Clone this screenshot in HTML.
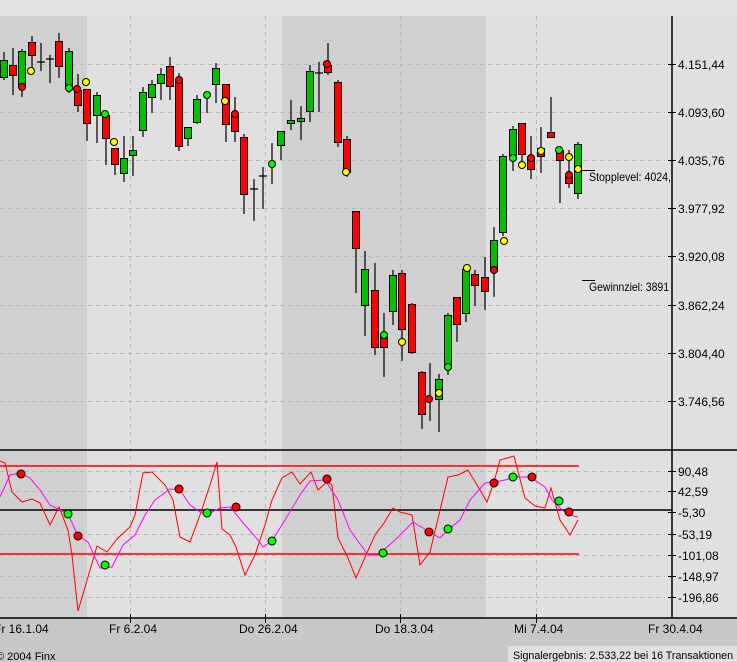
<!DOCTYPE html>
<html><head><meta charset="utf-8"><style>
html,body{margin:0;padding:0;background:#c8c8c8;}
svg{display:block;font-family:"Liberation Sans",sans-serif;}
</style></head><body>
<svg width="737" height="662" viewBox="0 0 737 662" xmlns="http://www.w3.org/2000/svg">
<rect x="0" y="0" width="737" height="662" fill="#c8c8c8"/>
<rect x="0" y="0" width="737" height="618" fill="#e0e0e0"/>
<rect x="0" y="0" width="737" height="16" fill="#e4e4e4"/>
<rect x="0" y="16" width="87" height="602" fill="#d0d0d0"/>
<rect x="282" y="16" width="204" height="602" fill="#d0d0d0"/>
<g stroke="#b8b8b8" stroke-dasharray="4,4" stroke-width="1">
<line x1="0" y1="64.5" x2="665" y2="64.5"/><line x1="0" y1="112.5" x2="665" y2="112.5"/><line x1="0" y1="160.5" x2="665" y2="160.5"/><line x1="0" y1="208.5" x2="665" y2="208.5"/><line x1="0" y1="256.5" x2="665" y2="256.5"/><line x1="0" y1="305.5" x2="665" y2="305.5"/><line x1="0" y1="353.5" x2="665" y2="353.5"/><line x1="0" y1="401.5" x2="665" y2="401.5"/>
<line x1="0" y1="471.5" x2="665" y2="471.5"/><line x1="0" y1="491.5" x2="665" y2="491.5"/><line x1="0" y1="534.5" x2="665" y2="534.5"/><line x1="0" y1="555.5" x2="665" y2="555.5"/><line x1="0" y1="576.5" x2="665" y2="576.5"/><line x1="0" y1="597.5" x2="665" y2="597.5"/>
<line x1="130.5" y1="16" x2="130.5" y2="618"/><line x1="265.5" y1="16" x2="265.5" y2="618"/><line x1="400.5" y1="16" x2="400.5" y2="618"/><line x1="536.5" y1="16" x2="536.5" y2="618"/>
</g>
<g stroke="#000" stroke-width="1.5">
<line x1="672" y1="16" x2="672" y2="618"/>
<line x1="0" y1="450" x2="737" y2="450"/>
<line x1="0" y1="618" x2="737" y2="618"/>
<line x1="0" y1="510" x2="672" y2="510"/>
</g>
<g stroke="#000" stroke-width="1">
<line x1="668" y1="64.5" x2="676" y2="64.5"/><line x1="668" y1="112.5" x2="676" y2="112.5"/><line x1="668" y1="160.5" x2="676" y2="160.5"/><line x1="668" y1="208.5" x2="676" y2="208.5"/><line x1="668" y1="256.5" x2="676" y2="256.5"/><line x1="668" y1="305.5" x2="676" y2="305.5"/><line x1="668" y1="353.5" x2="676" y2="353.5"/><line x1="668" y1="401.5" x2="676" y2="401.5"/>
<line x1="668" y1="471.5" x2="676" y2="471.5"/><line x1="668" y1="491.5" x2="676" y2="491.5"/><line x1="668" y1="512.5" x2="676" y2="512.5"/><line x1="668" y1="534.5" x2="676" y2="534.5"/><line x1="668" y1="555.5" x2="676" y2="555.5"/><line x1="668" y1="576.5" x2="676" y2="576.5"/><line x1="668" y1="597.5" x2="676" y2="597.5"/>
<line x1="130.5" y1="614" x2="130.5" y2="623"/><line x1="265.5" y1="614" x2="265.5" y2="623"/><line x1="400.5" y1="614" x2="400.5" y2="623"/><line x1="536.5" y1="614" x2="536.5" y2="623"/>
</g>
<g font-size="12" fill="#000">
<text x="678" y="69">4.151,44</text><text x="678" y="117">4.093,60</text><text x="678" y="165">4.035,76</text><text x="678" y="213">3.977,92</text><text x="678" y="261">3.920,08</text><text x="678" y="310">3.862,24</text><text x="678" y="358">3.804,40</text><text x="678" y="406">3.746,56</text>
<text x="678" y="476">90,48</text><text x="678" y="496">42,59</text><text x="678" y="517">-5,30</text><text x="678" y="539">-53,19</text><text x="678" y="560">-101,08</text><text x="678" y="581">-148,97</text><text x="678" y="602">-196,86</text>
<text x="-6" y="633">Fr 16.1.04</text><text x="109" y="633">Fr 6.2.04</text><text x="239" y="633">Do 26.2.04</text><text x="375" y="633">Do 18.3.04</text><text x="514" y="633">Mi 7.4.04</text><text x="648" y="633">Fr 30.4.04</text>
<text x="589" y="181" textLength="82" lengthAdjust="spacingAndGlyphs">Stopplevel: 4024,</text><text x="589" y="291" textLength="80" lengthAdjust="spacingAndGlyphs">Gewinnziel: 3891</text>
<text x="-4" y="660" font-size="11">© 2004 Finx</text>
</g>
<rect x="508" y="646" width="229" height="16" fill="#e0e0e0"/>
<text x="513" y="659" font-size="11" textLength="220" lengthAdjust="spacingAndGlyphs">Signalergebnis: 2.533,22 bei 16 Transaktionen</text>
<g stroke="#000" stroke-width="1"><line x1="582" y1="170.5" x2="595" y2="170.5"/><line x1="582" y1="280.5" x2="595" y2="280.5"/></g>
<line x1="0" y1="466" x2="579" y2="466" stroke="#f00" stroke-width="1.5"/>
<line x1="0" y1="554" x2="579" y2="554" stroke="#f00" stroke-width="1.5"/>
<polyline fill="none" stroke="#f00" stroke-width="1" points="0,461 5,463 12,492 22,502 32,499 40,503 50,525 59,507 68,530 72,555 78,611 88,577 97,546 107,552 117,539 130,527 135,515 143,473 152,472 165,485 173,500 180,537 190,542 200,515 210,485 217,462 222,529 230,535 236,547 245,575 255,555 265,525 272,500 282,478 292,472 300,484 311,472 318,490 327,482 332,485 338,538 348,558 356,578 366,555 375,535 384,523 393,508 400,512 412,515 420,565 430,552 448,477 458,475 468,470 480,490 487,502 494,482 500,460 507,458 514,456 525,498 535,506 545,508 551,488 560,520 570,535 578,520"/>
<polyline fill="none" stroke="#f0f" stroke-width="1" points="0,497 10,475 20,473 30,478 40,490 50,505 60,510 68,514 78,536 88,542 100,568 112,567 123,545 135,535 145,515 155,500 170,489 180,490 190,505 200,512 210,513 220,508 230,507 245,525 258,540 263,547 272,541 285,520 300,495 310,481 325,480 338,500 350,530 368,555 378,555 395,540 413,522 428,531 440,538 448,530 460,520 470,500 485,483 494,482 505,480 515,477 530,477 545,487 552,500 562,510 570,515 578,517"/>
<g stroke="#000" stroke-width="1">
<circle cx="21" cy="474" r="4" fill="#f00"/><circle cx="78" cy="536" r="4" fill="#f00"/><circle cx="179" cy="489" r="4" fill="#f00"/><circle cx="236" cy="507" r="4" fill="#f00"/><circle cx="327" cy="479" r="4" fill="#f00"/><circle cx="429" cy="532" r="4" fill="#f00"/><circle cx="494" cy="483" r="4" fill="#f00"/><circle cx="532" cy="477" r="4" fill="#f00"/><circle cx="569" cy="512" r="4" fill="#f00"/>
<circle cx="68" cy="514" r="4" fill="#0f0"/><circle cx="105" cy="565" r="4" fill="#0f0"/><circle cx="207" cy="513" r="4" fill="#0f0"/><circle cx="272" cy="541" r="4" fill="#0f0"/><circle cx="383" cy="553" r="4" fill="#0f0"/><circle cx="448" cy="529" r="4" fill="#0f0"/><circle cx="513" cy="477" r="4" fill="#0f0"/><circle cx="559" cy="501" r="4" fill="#0f0"/>
</g>
<g stroke="#000" stroke-width="1.2">
<path d="M4,52V80M13,48V95M22,49V97M32,36V70M41,43V71M50,55V83M59,33V78M69,48V93M78,74V112M87,89V141M97,92V143M106,113V165M115,148V175M124,136V182M133,136V176M143,87V137M152,80V113M161,68V100M170,57V100M179,73V151M188,127V146M197,95V124M207,96V113M216,63V103M226,84V142M235,97V142M244,134V214M254,179V221M263,167V209M272,143V184M281,131V160M291,100V130M301,106V140M310,65V122M319,62V112M328,43V75M338,80V147M347,136V177M356,211V293M365,251V336M375,263V355M384,313V377M393,270V325M402,270V361M412,303V354M422,371V429M430,363V421M439,374V432M448,313V375M457,297V342M466,267V322M475,270V306M485,257V310M494,227V297M503,154V236M513,126V171M522,123V165M531,136V179M541,127V173M551,97V138M560,146V203M569,150V188M578,142V199"/>
<path d="M37,62H45M46,59H54M250,189H258M259,176H267M315,73H323"/>
</g>
<g stroke="#000" stroke-width="1">
<g fill="#00c000">
<rect x="0.5" y="60.5" width="7" height="17"/><rect x="18.5" y="51.5" width="7" height="36"/><rect x="65.5" y="51.5" width="7" height="37"/><rect x="93.5" y="95.5" width="7" height="20"/><rect x="120.5" y="158.5" width="7" height="15"/><rect x="129.5" y="150.5" width="7" height="5"/><rect x="139.5" y="92.5" width="7" height="38"/><rect x="148.5" y="84.5" width="7" height="13"/><rect x="157.5" y="74.5" width="7" height="9"/><rect x="184.5" y="127.5" width="7" height="11"/><rect x="193.5" y="99.5" width="7" height="23"/><rect x="212.5" y="68.5" width="7" height="16"/><rect x="277.5" y="131.5" width="7" height="14"/><rect x="287.5" y="120.5" width="7" height="3"/><rect x="297.5" y="118.5" width="7" height="3"/><rect x="306.5" y="71.5" width="7" height="40"/><rect x="361.5" y="269.5" width="7" height="36"/><rect x="389.5" y="275.5" width="7" height="36"/><rect x="435.5" y="379.5" width="7" height="20"/><rect x="444.5" y="315.5" width="7" height="52"/><rect x="462.5" y="269.5" width="7" height="44"/><rect x="490.5" y="240.5" width="7" height="30"/><rect x="499.5" y="156.5" width="7" height="76"/><rect x="509.5" y="129.5" width="7" height="26"/><rect x="574.5" y="144.5" width="7" height="49"/>
</g>
<g fill="#f00">
<rect x="9.5" y="65.5" width="7" height="10"/><rect x="28.5" y="42.5" width="7" height="13"/><rect x="55.5" y="41.5" width="7" height="25"/><rect x="74.5" y="90.5" width="7" height="15"/><rect x="83.5" y="89.5" width="7" height="34"/><rect x="102.5" y="115.5" width="7" height="23"/><rect x="111.5" y="148.5" width="7" height="16"/><rect x="166.5" y="66.5" width="7" height="20"/><rect x="175.5" y="81.5" width="7" height="65"/><rect x="222.5" y="84.5" width="7" height="40"/><rect x="231.5" y="115.5" width="7" height="16"/><rect x="240.5" y="137.5" width="7" height="57"/><rect x="324.5" y="65.5" width="7" height="7"/><rect x="334.5" y="82.5" width="7" height="60"/><rect x="343.5" y="139.5" width="7" height="33"/><rect x="352.5" y="211.5" width="7" height="37"/><rect x="371.5" y="290.5" width="7" height="57"/><rect x="380.5" y="336.5" width="7" height="11"/><rect x="398.5" y="273.5" width="7" height="56"/><rect x="408.5" y="304.5" width="7" height="48"/><rect x="418.5" y="372.5" width="7" height="42"/><rect x="453.5" y="297.5" width="7" height="27"/><rect x="471.5" y="274.5" width="7" height="11"/><rect x="481.5" y="277.5" width="7" height="14"/><rect x="518.5" y="123.5" width="7" height="31"/><rect x="527.5" y="157.5" width="7" height="12"/><rect x="537.5" y="148.5" width="7" height="8"/><rect x="547.5" y="132.5" width="7" height="5"/><rect x="556.5" y="150.5" width="7" height="10"/><rect x="565.5" y="176.5" width="7" height="7"/>
</g>
<g fill="#f00"><circle cx="22" cy="87" r="3.5"/><circle cx="77" cy="89" r="3.5"/><circle cx="179" cy="80" r="3.5"/><circle cx="235" cy="114" r="3.5"/><circle cx="327" cy="64" r="3.5"/><circle cx="429" cy="399" r="3.5"/><circle cx="494" cy="270" r="3.5"/><circle cx="531" cy="158" r="3.5"/><circle cx="569" cy="175" r="3.5"/></g>
<g fill="#0f0"><circle cx="69" cy="88" r="3.5"/><circle cx="105" cy="114" r="3.5"/><circle cx="207" cy="95" r="3.5"/><circle cx="272" cy="164" r="3.5"/><circle cx="384" cy="335" r="3.5"/><circle cx="448" cy="367" r="3.5"/><circle cx="513" cy="158" r="3.5"/><circle cx="559" cy="150" r="3.5"/></g>
<g fill="#ff0"><circle cx="31" cy="71" r="3.5"/><circle cx="86" cy="82" r="3.5"/><circle cx="114" cy="142" r="3.5"/><circle cx="225" cy="101" r="3.5"/><circle cx="346" cy="172" r="3.5"/><circle cx="402" cy="342" r="3.5"/><circle cx="439" cy="393" r="3.5"/><circle cx="467" cy="268" r="3.5"/><circle cx="504" cy="241" r="3.5"/><circle cx="522" cy="165" r="3.5"/><circle cx="541" cy="151" r="3.5"/><circle cx="569" cy="157" r="3.5"/><circle cx="578" cy="169" r="3.5"/></g>
</g>
</svg>
</body></html>
